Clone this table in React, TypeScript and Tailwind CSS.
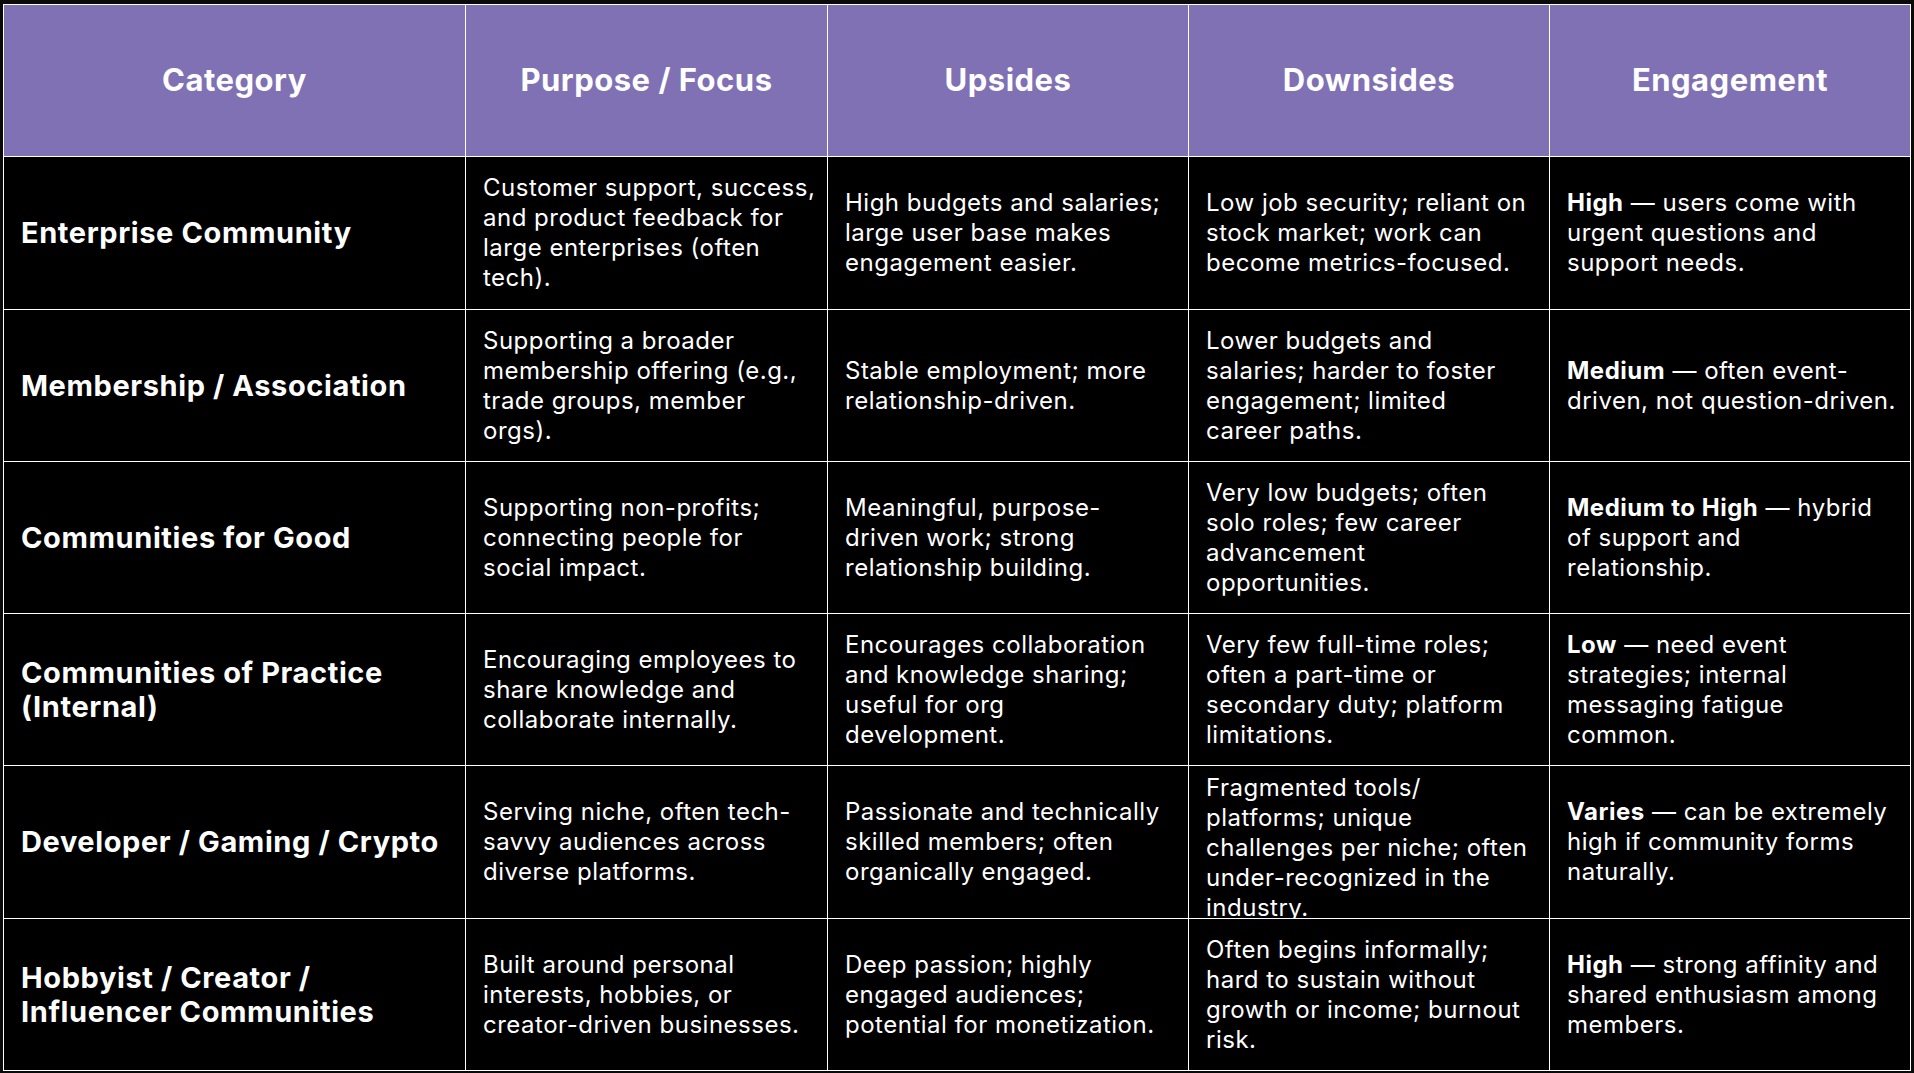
import React from "react";

type Row = {
  cat: string[];
  purpose: string[];
  up: string[];
  down: string[];
  engBold: string;
  eng: string[];
};

const rows: Row[] = [
  {
    cat: ["Enterprise Community"],
    purpose: ["Customer support, success,", "and product feedback for", "large enterprises (often", "tech)."],
    up: ["High budgets and salaries;", "large user base makes", "engagement easier."],
    down: ["Low job security; reliant on", "stock market; work can", "become metrics-focused."],
    engBold: "High",
    eng: [" — users come with", "urgent questions and", "support needs."],
  },
  {
    cat: ["Membership / Association"],
    purpose: ["Supporting a broader", "membership offering (e.g.,", "trade groups, member", "orgs)."],
    up: ["Stable employment; more", "relationship-driven."],
    down: ["Lower budgets and", "salaries; harder to foster", "engagement; limited", "career paths."],
    engBold: "Medium",
    eng: [" — often event-", "driven, not question-driven."],
  },
  {
    cat: ["Communities for Good"],
    purpose: ["Supporting non-profits;", "connecting people for", "social impact."],
    up: ["Meaningful, purpose-", "driven work; strong", "relationship building."],
    down: ["Very low budgets; often", "solo roles; few career", "advancement", "opportunities."],
    engBold: "Medium to High",
    eng: [" — hybrid", "of support and", "relationship."],
  },
  {
    cat: ["Communities of Practice", "(Internal)"],
    purpose: ["Encouraging employees to", "share knowledge and", "collaborate internally."],
    up: ["Encourages collaboration", "and knowledge sharing;", "useful for org", "development."],
    down: ["Very few full-time roles;", "often a part-time or", "secondary duty; platform", "limitations."],
    engBold: "Low",
    eng: [" — need event", "strategies; internal", "messaging fatigue", "common."],
  },
  {
    cat: ["Developer / Gaming / Crypto"],
    purpose: ["Serving niche, often tech-", "savvy audiences across", "diverse platforms."],
    up: ["Passionate and technically", "skilled members; often", "organically engaged."],
    down: ["Fragmented tools/", "platforms; unique", "challenges per niche; often", "under-recognized in the", "industry."],
    engBold: "Varies",
    eng: [" — can be extremely", "high if community forms", "naturally."],
  },
  {
    cat: ["Hobbyist / Creator /", "Influencer Communities"],
    purpose: ["Built around personal", "interests, hobbies, or", "creator-driven businesses."],
    up: ["Deep passion; highly", "engaged audiences;", "potential for monetization."],
    down: ["Often begins informally;", "hard to sustain without", "growth or income; burnout", "risk."],
    engBold: "High",
    eng: [" — strong affinity and", "shared enthusiasm among", "members."],
  },
];

const headers = ["Category", "Purpose / Focus", "Upsides", "Downsides", "Engagement"];

const font = { fontFamily: "Inter, 'Open Sans', sans-serif" };

function Lines({ lines }: { lines: string[] }) {
  return (
    <>
      {lines.map((l, i) => (
        <div key={i} className="whitespace-nowrap">
          {l}
        </div>
      ))}
    </>
  );
}

function Cell({ children, cls = "" }: { children: React.ReactNode; cls?: string }) {
  return (
    <div
      className={
        "bg-black overflow-hidden flex flex-col [justify-content:safe_center] py-[7px] pl-[17px] pr-[4px] text-white " +
        cls
      }
    >
      {children}
    </div>
  );
}

export default function App() {
  return (
    <div className="w-[1914px] h-[1073px] bg-[#0a0a0a] pl-[3px] pt-[4px]" style={font}>
      <div className="grid w-[1908px] grid-cols-[461px_361px_360px_360px_360px] grid-rows-[151px_152px_151px_151px_151px_152px_151px] gap-[1px] bg-white p-[1px]">
        {headers.map((h) => (
          <div
            key={h}
            className="bg-[#8070b4] flex items-center justify-center text-white text-[31px] font-bold tracking-[0.5px]"
          >
            {h}
          </div>
        ))}
        {rows.map((r, i) => (
          <React.Fragment key={i}>
            <Cell cls="text-[29px] leading-[34px] font-bold tracking-[0.6px]">
              <Lines lines={r.cat} />
            </Cell>
            <Cell cls="text-[24px] leading-[30px] tracking-[0.5px]">
              <Lines lines={r.purpose} />
            </Cell>
            <Cell cls="text-[24px] leading-[30px] tracking-[0.5px]">
              <Lines lines={r.up} />
            </Cell>
            <Cell cls="text-[24px] leading-[30px] tracking-[0.5px]">
              <Lines lines={r.down} />
            </Cell>
            <Cell cls="text-[24px] leading-[30px] tracking-[0.5px]">
              <div className="whitespace-nowrap">
                <span className="font-bold">{r.engBold}</span>
                {r.eng[0]}
              </div>
              <Lines lines={r.eng.slice(1)} />
            </Cell>
          </React.Fragment>
        ))}
      </div>
    </div>
  );
}
